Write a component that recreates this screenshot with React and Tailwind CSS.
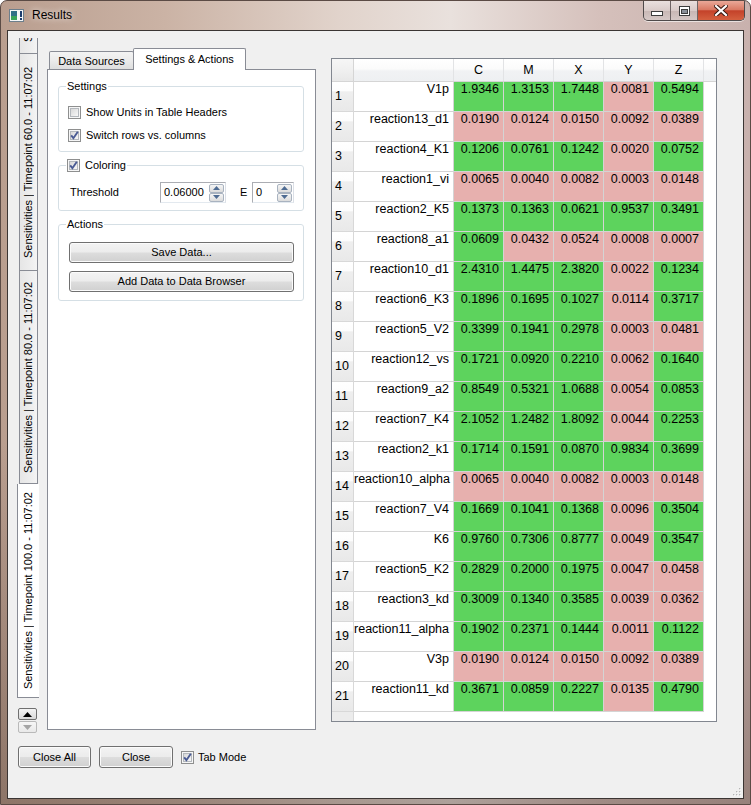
const FONT = "font-['Liberation_Sans',Arial,sans-serif]";

const ROWS = [
  ["V1p", "1.9346", "1.3153", "1.7448", "0.0081", "0.5494"],
  ["reaction13_d1", "0.0190", "0.0124", "0.0150", "0.0092", "0.0389"],
  ["reaction4_K1", "0.1206", "0.0761", "0.1242", "0.0020", "0.0752"],
  ["reaction1_vi", "0.0065", "0.0040", "0.0082", "0.0003", "0.0148"],
  ["reaction2_K5", "0.1373", "0.1363", "0.0621", "0.9537", "0.3491"],
  ["reaction8_a1", "0.0609", "0.0432", "0.0524", "0.0008", "0.0007"],
  ["reaction10_d1", "2.4310", "1.4475", "2.3820", "0.0022", "0.1234"],
  ["reaction6_K3", "0.1896", "0.1695", "0.1027", "0.0114", "0.3717"],
  ["reaction5_V2", "0.3399", "0.1941", "0.2978", "0.0003", "0.0481"],
  ["reaction12_vs", "0.1721", "0.0920", "0.2210", "0.0062", "0.1640"],
  ["reaction9_a2", "0.8549", "0.5321", "1.0688", "0.0054", "0.0853"],
  ["reaction7_K4", "2.1052", "1.2482", "1.8092", "0.0044", "0.2253"],
  ["reaction2_k1", "0.1714", "0.1591", "0.0870", "0.9834", "0.3699"],
  ["reaction10_alpha", "0.0065", "0.0040", "0.0082", "0.0003", "0.0148"],
  ["reaction7_V4", "0.1669", "0.1041", "0.1368", "0.0096", "0.3504"],
  ["K6", "0.9760", "0.7306", "0.8777", "0.0049", "0.3547"],
  ["reaction5_K2", "0.2829", "0.2000", "0.1975", "0.0047", "0.0458"],
  ["reaction3_kd", "0.3009", "0.1340", "0.3585", "0.0039", "0.0362"],
  ["reaction11_alpha", "0.1902", "0.2371", "0.1444", "0.0011", "0.1122"],
  ["V3p", "0.0190", "0.0124", "0.0150", "0.0092", "0.0389"],
  ["reaction11_kd", "0.3671", "0.0859", "0.2227", "0.0135", "0.4790"],
];

const COLUMNS = ["C", "M", "X", "Y", "Z"];
const THRESHOLD = 0.06;

function CheckBox({ checked = false }) {
  return (
    <svg width="13" height="13" viewBox="0 0 13 13" className="shrink-0">
      <defs>
        <linearGradient id="cb-fill" x1="0" y1="0" x2="1" y2="1">
          <stop offset="0" stopColor="#d6d6d6" />
          <stop offset="1" stopColor="#fafafa" />
        </linearGradient>
      </defs>
      <rect x="0.5" y="0.5" width="12" height="12" fill="#f6f6f6" stroke="#8e8f8f" />
      <rect x="2.5" y="2.5" width="8" height="8" fill="url(#cb-fill)" stroke="#b4b8bd" />
      {checked ? (
        <path d="M3.2 6.4 L5.4 9.2 L9.8 2.8" fill="none" stroke="#4a5b94" strokeWidth="1.9" />
      ) : null}
    </svg>
  );
}

function Button({ children, className = "" }) {
  return (
    <div
      className={`flex items-center justify-center rounded-[3px] border border-[#707070] bg-[linear-gradient(180deg,#f3f3f3_0%,#ececec_48%,#dddddd_52%,#d0d0d0_100%)] text-[11px] text-black shadow-[inset_0_0_0_1px_#fbfbfb] ${className}`}
    >
      {children}
    </div>
  );
}

function SpinArrow({ up = false }) {
  return (
    <div className="flex h-[9px] w-[15px] items-center justify-center rounded-[2px] border border-[#a9b3c0] bg-[linear-gradient(180deg,#f5f5f5,#dcdcdc)]">
      <svg width="7" height="4" viewBox="0 0 7 4">
        {up ? (
          <path d="M0 4 L3.5 0 L7 4 Z" fill="#4e6b92" />
        ) : (
          <path d="M0 0 L3.5 4 L7 0 Z" fill="#4e6b92" />
        )}
      </svg>
    </div>
  );
}

function SpinBox({ value, className = "" }) {
  return (
    <div
      className={`flex h-[21px] items-center border border-[#abadb3] border-b-[#e3e9ef] border-r-[#dbdfe6] bg-white pl-[3px] text-[11px] ${className}`}
    >
      <span className="flex-1">{value}</span>
      <div className="mr-[1px] flex flex-col">
        <SpinArrow up />
        <SpinArrow />
      </div>
    </div>
  );
}

function GroupBox({ title, className = "", children }) {
  return (
    <div className={`relative rounded-[3px] border border-[#d5dfe5] ${className}`}>
      <div className="absolute -top-[7px] left-[7px] flex items-center gap-[5px] bg-white px-[1px] text-[11px] leading-[13px]">
        {title}
      </div>
      {children}
    </div>
  );
}

function VTab({ label, selected = false, height }) {
  return (
    <div
      className={
        selected
          ? "flex w-[22px] items-center justify-center border-b border-l border-[#898c95] bg-white"
          : "ml-[2px] flex w-[19px] items-center justify-center border-x border-b border-[#898c95] bg-[linear-gradient(90deg,#e6e6e6_0%,#ececec_50%,#f4f4f4_100%)]"
      }
      style={{ height }}
    >
      <span className="rotate-180 whitespace-nowrap text-[11px] leading-[13px] [writing-mode:vertical-rl]">
        {label}
      </span>
    </div>
  );
}

function ScrollArrow({ up = false }) {
  return (
    <div
      className={
        up
          ? "flex h-[12px] w-[19px] items-center justify-center rounded-[2px] border border-[#707070] bg-[linear-gradient(180deg,#f4f4f4,#d9d9d9)]"
          : "flex h-[12px] w-[19px] items-center justify-center rounded-[2px] border border-[#b9b9b9] bg-[linear-gradient(180deg,#f6f6f6,#e9e9e9)]"
      }
    >
      <svg width="9" height="5" viewBox="0 0 9 5">
        {up ? (
          <path d="M0 5 L4.5 0 L9 5 Z" fill="#000" />
        ) : (
          <path d="M0 0 L4.5 5 L9 0 Z" fill="#a5a5a5" />
        )}
      </svg>
    </div>
  );
}

function VerticalTabs() {
  const base = "Sensitivities | Timepoint ";
  return (
    <div className="flex h-[696px] w-[22px] flex-col">
      <div className="ml-[2px] flex h-[16px] w-[19px] flex-col justify-end overflow-hidden">
        <div className="flex h-[214px] w-[19px] shrink-0 items-center justify-center border-x border-b border-[#898c95] bg-[linear-gradient(90deg,#e6e6e6_0%,#ececec_50%,#f4f4f4_100%)]">
          <span className="rotate-180 whitespace-nowrap text-[11px] leading-[13px] [writing-mode:vertical-rl]">
            {base + "40.0 - 11:07:02"}
          </span>
        </div>
      </div>
      <VTab label={base + "60.0 - 11:07:02"} height={217} />
      <VTab label={base + "80.0 - 11:07:02"} height={213} />
      <VTab label={base + "100.0 - 11:07:02"} height={214} selected />
      <div className="mt-auto ml-[1px] flex flex-col gap-[1px] pb-[1px]">
        <ScrollArrow up />
        <ScrollArrow />
      </div>
    </div>
  );
}

function SettingsPanel() {
  return (
    <div className="ml-[8px] mt-[10px] w-[269px]">
      <div className="flex h-[21px] items-end pl-[2px] text-[11px]">
        <div className="flex h-[18px] w-[85px] items-center justify-center rounded-t-[2px] border-x border-t border-[#898c95] bg-[linear-gradient(180deg,#f3f3f3_0%,#ebebeb_50%,#dedede_100%)] pt-[1px]">
          Data Sources
        </div>
        <div className="relative z-10 -mb-[1px] -ml-[1px] flex h-[22px] w-[113px] items-center justify-center rounded-t-[2px] border-x border-t border-[#898c95] bg-white pb-[1px]">
          Settings &amp; Actions
        </div>
      </div>
      <div className="h-[661px] border border-[#898c95] bg-white pl-[10px] pt-[16px]">
        <GroupBox title="Settings" className="h-[66px] w-[246px]">
          <div className="pl-[9px] pt-[14px] text-[11px]">
            <div className="flex h-[23px] items-center gap-[5px]">
              <CheckBox />
              <span>Show Units in Table Headers</span>
            </div>
            <div className="flex h-[23px] items-center gap-[5px]">
              <CheckBox checked />
              <span>Switch rows vs. columns</span>
            </div>
          </div>
        </GroupBox>
        <GroupBox
          title={
            <>
              <CheckBox checked />
              <span>Coloring</span>
            </>
          }
          className="mt-[13px] h-[46px] w-[246px]"
        >
          <div className="flex items-center pl-[11px] pt-[16px] text-[11px]">
            <span className="w-[90px]">Threshold</span>
            <SpinBox value="0.06000" className="w-[66px]" />
            <span className="ml-[14px] w-[12px]">E</span>
            <SpinBox value="0" className="w-[42px]" />
          </div>
        </GroupBox>
        <GroupBox title="Actions" className="mt-[13px] h-[77px] w-[246px]">
          <div className="flex flex-col gap-[8px] pl-[10px] pt-[17px]">
            <Button className="h-[21px] w-[225px]">Save Data...</Button>
            <Button className="h-[21px] w-[225px]">Add Data to Data Browser</Button>
          </div>
        </GroupBox>
      </div>
    </div>
  );
}

function DataTable() {
  const headCell =
    "flex h-full items-center justify-center border-r border-[#e2e3e5]";
  return (
    <div className="ml-[15px] mt-[20px] h-[664px] w-[386px] overflow-hidden border border-[#828790] bg-white text-[12.5px] leading-[15px]">
      <div className="flex h-[23px] border-b border-[#d5d5d5] bg-[linear-gradient(180deg,#ffffff_0%,#fbfbfb_45%,#f1f2f4_55%,#eef0f2_100%)]">
        <div className="h-full w-[22px] border-r border-[#d5d5d5] bg-[linear-gradient(180deg,#f6f6f6_0%,#f0f0f0_50%,#e8e8e8_100%)]" />
        <div className={`${headCell} w-[100px]`} />
        {COLUMNS.map((c) => (
          <div key={c} className={`${headCell} w-[50px]`}>
            {c}
          </div>
        ))}
        <div className="h-full flex-1" />
      </div>
      {ROWS.map((row, i) => (
        <div key={i} className="flex h-[30px]">
          <div className="flex h-full w-[22px] items-center border-b border-r border-[#d8d8d8] bg-[linear-gradient(180deg,#ffffff_0%,#fdfdfd_30%,#efefef_34%,#e9e9e9_100%)] pl-[3px]">
            {i + 1}
          </div>
          <div className="h-full w-[100px] border-b border-r border-[#d4d4d4] pr-[4px] text-right">
            {row[0]}
          </div>
          {row.slice(1).map((v, j) => (
            <div
              key={j}
              className={`h-full w-[50px] border-b border-r border-[#d4d4d4] pr-[4px] text-right ${
                parseFloat(v) > THRESHOLD ? "bg-[#5dd35d]" : "bg-[#e7b0ae]"
              }`}
            >
              {v}
            </div>
          ))}
        </div>
      ))}
      <div className="flex h-[9px]">
        <div className="h-full w-[22px] border-r border-[#d8d8d8] bg-[#ececec]" />
      </div>
    </div>
  );
}

function TitleBar() {
  return (
    <div className="flex h-[29px] items-start">
      <div className="mt-[8px] ml-[8px]">
        <svg width="15" height="13" viewBox="0 0 15 13">
          <rect x="0.5" y="0.5" width="14" height="12" fill="#f4f6f7" stroke="#6d7f8c" />
          <rect x="2" y="2" width="6" height="9" fill="#2f6f88" />
          <rect x="2" y="7" width="6" height="4" fill="#39a35a" />
          <rect x="11" y="2" width="2" height="6" fill="#1d3e6e" />
          <rect x="11" y="9" width="2" height="2" fill="#1d3e6e" />
        </svg>
      </div>
      <span className="ml-[8px] mt-[7px] text-[12px] leading-[15px] text-black [text-shadow:0_0_6px_rgba(255,255,255,0.95)]">
        Results
      </span>
      <div className="ml-auto mr-[5px] flex h-[20px] overflow-hidden rounded-b-[5px] border border-t-0 border-[#4f4a4a] shadow-[0_1px_0_rgba(255,255,255,0.6)]">
        <div className="flex w-[27px] items-center justify-center border-r border-[#6e6464] bg-[linear-gradient(180deg,rgba(255,255,255,0.55)_0%,rgba(230,225,225,0.45)_50%,rgba(190,180,180,0.4)_51%,rgba(220,215,215,0.5)_100%)]">
          <svg width="12" height="5" viewBox="0 0 12 5" className="mt-[5px]">
            <rect x="0.5" y="0.5" width="11" height="4" fill="#fff" stroke="#3d3d3d" />
          </svg>
        </div>
        <div className="flex w-[27px] items-center justify-center border-r border-[#6e6464] bg-[linear-gradient(180deg,rgba(255,255,255,0.55)_0%,rgba(230,225,225,0.45)_50%,rgba(190,180,180,0.4)_51%,rgba(220,215,215,0.5)_100%)]">
          <svg width="11" height="10" viewBox="0 0 11 10">
            <rect x="0.5" y="0.5" width="10" height="9" fill="#fff" stroke="#3d3d3d" />
            <rect x="2.5" y="3.5" width="6" height="4" fill="#8a9099" stroke="#3d3d3d" />
          </svg>
        </div>
        <div className="flex w-[46px] items-center justify-center bg-[linear-gradient(180deg,#e9a898_0%,#d97a64_45%,#c4422a_52%,#d4603f_100%)]">
          <svg width="14" height="11" viewBox="0 0 14 11">
            <path d="M2 1 L12 10 M12 1 L2 10" stroke="#3a1a12" strokeWidth="4.2" strokeLinecap="square" />
            <path d="M2 1 L12 10 M12 1 L2 10" stroke="#ffffff" strokeWidth="2.2" strokeLinecap="square" />
          </svg>
        </div>
      </div>
    </div>
  );
}

export default function App() {
  return (
    <div
      className={`${FONT} h-[805px] w-[751px] overflow-hidden rounded-t-[7px] border border-[#5b4b45] bg-[linear-gradient(180deg,rgba(0,0,0,0)_55%,rgba(60,40,30,0.35)_100%),linear-gradient(90deg,#b99e8f_0%,#cbb3a5_22%,#e1d3cb_45%,#e9e1dd_60%,#d5c0bb_80%,#c8b1ad_100%)] text-black`}
    >
      <TitleBar />
      <div className="relative mx-[6px] h-[769px] border border-[#3b3533] bg-[#f0f0f0]">
        <div className="flex h-[703px] items-start pl-[9px] pt-[7px]">
          <VerticalTabs />
          <SettingsPanel />
          <DataTable />
        </div>
        <div className="mt-[12px] flex items-center pl-[10px] text-[11px]">
          <Button className="h-[22px] w-[73px]">Close All</Button>
          <Button className="ml-[8px] h-[22px] w-[74px]">Close</Button>
          <div className="ml-[8px] flex items-center gap-[4px]">
            <CheckBox checked />
            <span>Tab Mode</span>
          </div>
        </div>
        <svg
          width="9"
          height="9"
          viewBox="0 0 9 9"
          className="absolute bottom-[2px] right-[2px]"
        >
          {[
            [7, 1],
            [4, 4],
            [7, 4],
            [1, 7],
            [4, 7],
            [7, 7],
          ].map(([x, y]) => (
            <g key={`${x}-${y}`}>
              <rect x={x + 0.7} y={y + 0.7} width="1.3" height="1.3" fill="#ffffff" />
              <rect x={x} y={y} width="1.3" height="1.3" fill="#b5b5b5" />
            </g>
          ))}
        </svg>
      </div>
    </div>
  );
}
